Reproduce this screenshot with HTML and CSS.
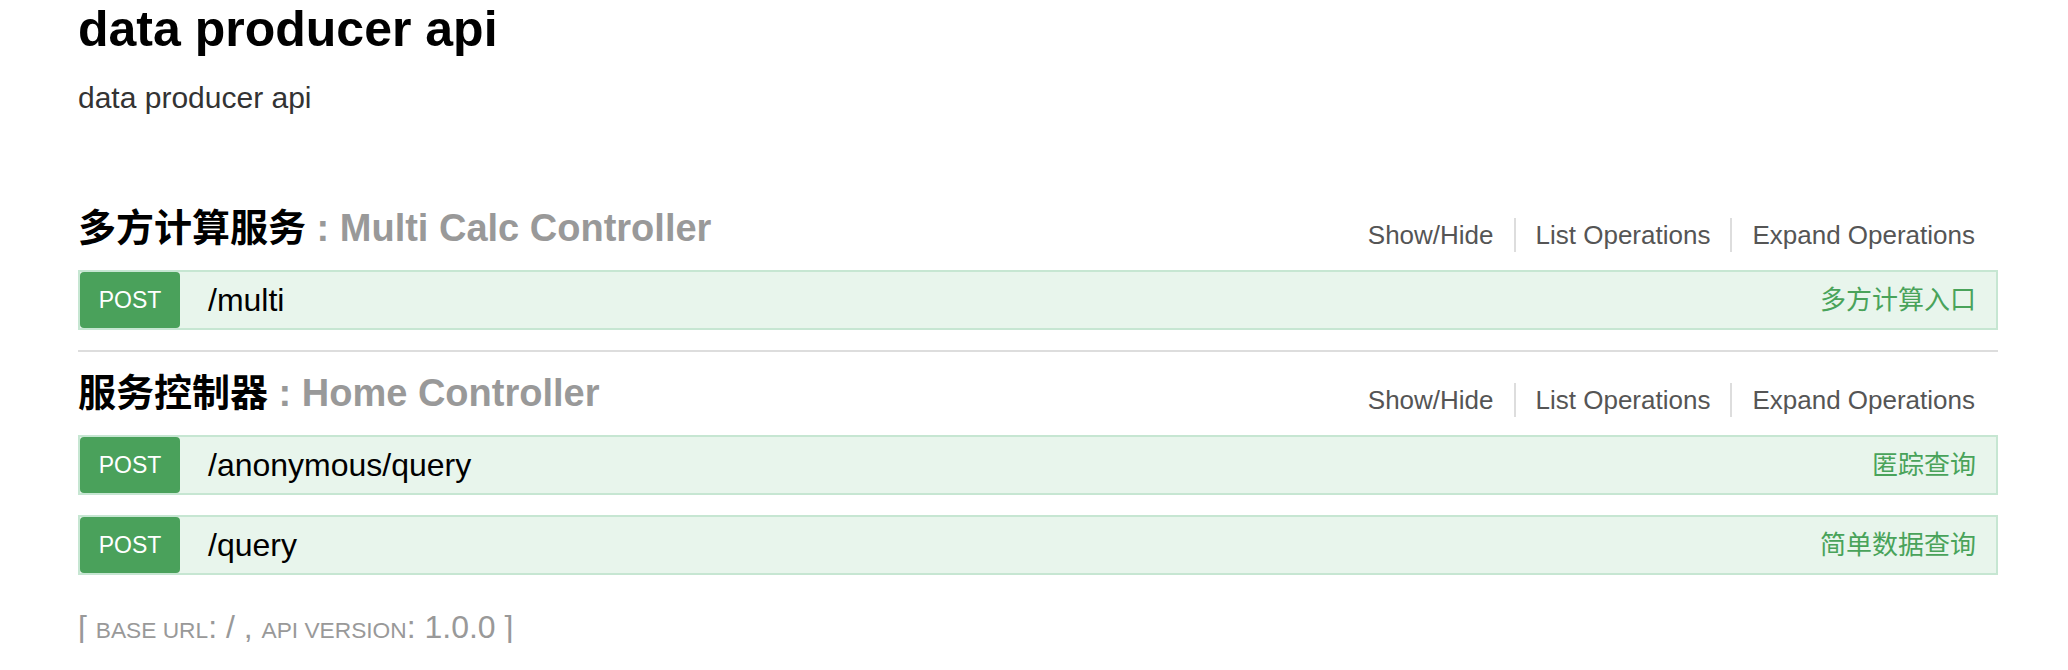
FILE: index.html
```html
<!DOCTYPE html>
<html lang="zh-CN">
<head>
<meta charset="utf-8">
<title>data producer api</title>
<link rel="stylesheet" href="styles.css">
</head>
<body>
<div class="wrap">
  <div class="info">
    <h1 class="info-title">data producer api</h1>
    <p class="info-desc">data producer api</p>
  </div>
  <ul class="resources">
    <li class="resource">
      <div class="res-heading">
        <h2 class="res-title"><span class="tag">多方计算服务</span> : Multi Calc Controller</h2>
        <ul class="options">
          <li>Show/Hide</li>
          <li>List Operations</li>
          <li>Expand Operations</li>
        </ul>
      </div>
      <ul class="operations">
        <li class="op"><span class="method">POST</span><span class="path">/multi</span><span class="summary">多方计算入口</span></li>
      </ul>
    </li>
    <li class="resource">
      <div class="res-heading">
        <h2 class="res-title"><span class="tag">服务控制器</span> : Home Controller</h2>
        <ul class="options">
          <li>Show/Hide</li>
          <li>List Operations</li>
          <li>Expand Operations</li>
        </ul>
      </div>
      <ul class="operations">
        <li class="op"><span class="method">POST</span><span class="path">/anonymous/query</span><span class="summary">匿踪查询</span></li>
        <li class="op"><span class="method">POST</span><span class="path">/query</span><span class="summary">简单数据查询</span></li>
      </ul>
    </li>
  </ul>
  <div class="footer">[ <span class="sc">base url</span>: / , <span class="sc">api version</span>: 1.0.0 ]</div>
</div>
</body>
</html>
```

FILE: styles.css
```css
html, body {
  margin: 0;
  padding: 0;
  background: #ffffff;
}
body {
  font-family: "Liberation Sans", "Noto Sans CJK SC", sans-serif;
  color: #000;
}
.wrap {
  width: 1920px;
  margin-left: 78px;
  line-height: 1;
}
.info-title {
  margin: 0;
  padding-top: 4px;
  font-size: 50px;
  font-weight: bold;
  line-height: 1;
}
.info-desc {
  margin: 29px 0 0;
  font-size: 30px;
  line-height: 1;
  color: #333;
}
.resources {
  list-style: none;
  margin: 74px 0 0;
  padding: 0;
}
.resource {
  border-bottom: 2px solid #dddddd;
}
.resource:last-child {
  border-bottom: none;
}
.res-heading {
  display: flex;
  justify-content: space-between;
  align-items: flex-start;
  height: 83px;
}
.res-title {
  margin: 0;
  font-size: 38px;
  line-height: 83px;
  font-weight: bold;
  color: #999999;
  white-space: nowrap;
}
.tag {
  color: #000;
}
.options {
  display: flex;
  list-style: none;
  margin: 31px 23px 0 0;
  padding: 0;
  font-size: 26px;
  color: #555555;
}
.options li {
  padding: 4px 20px;
  line-height: 1;
  border-right: 2px solid #dddddd;
}
.options li:first-child {
  padding-left: 0;
}
.options li:last-child {
  padding-right: 0;
  border-right: none;
}
.operations {
  list-style: none;
  margin: 0;
  padding: 0;
}
.op {
  display: flex;
  align-items: center;
  box-sizing: border-box;
  height: 60px;
  margin-bottom: 20px;
  background: #e8f5ec;
  border: 2px solid #c6e6d2;
}
.method {
  display: flex;
  align-items: center;
  justify-content: center;
  width: 100px;
  height: 56px;
  background: #4aa15b;
  color: #ffffff;
  border-radius: 4px;
  font-size: 23px;
  text-transform: uppercase;
}
.path {
  flex: 1;
  padding-left: 28px;
  font-size: 32px;
  color: #000;
}
.summary {
  padding-right: 20px;
  font-size: 26px;
  color: #49a35a;
}
.footer {
  margin-top: 36px;
  font-size: 32px;
  line-height: 1;
  color: #999999;
}
.sc {
  text-transform: uppercase;
  font-size: 0.71em;
}
```
